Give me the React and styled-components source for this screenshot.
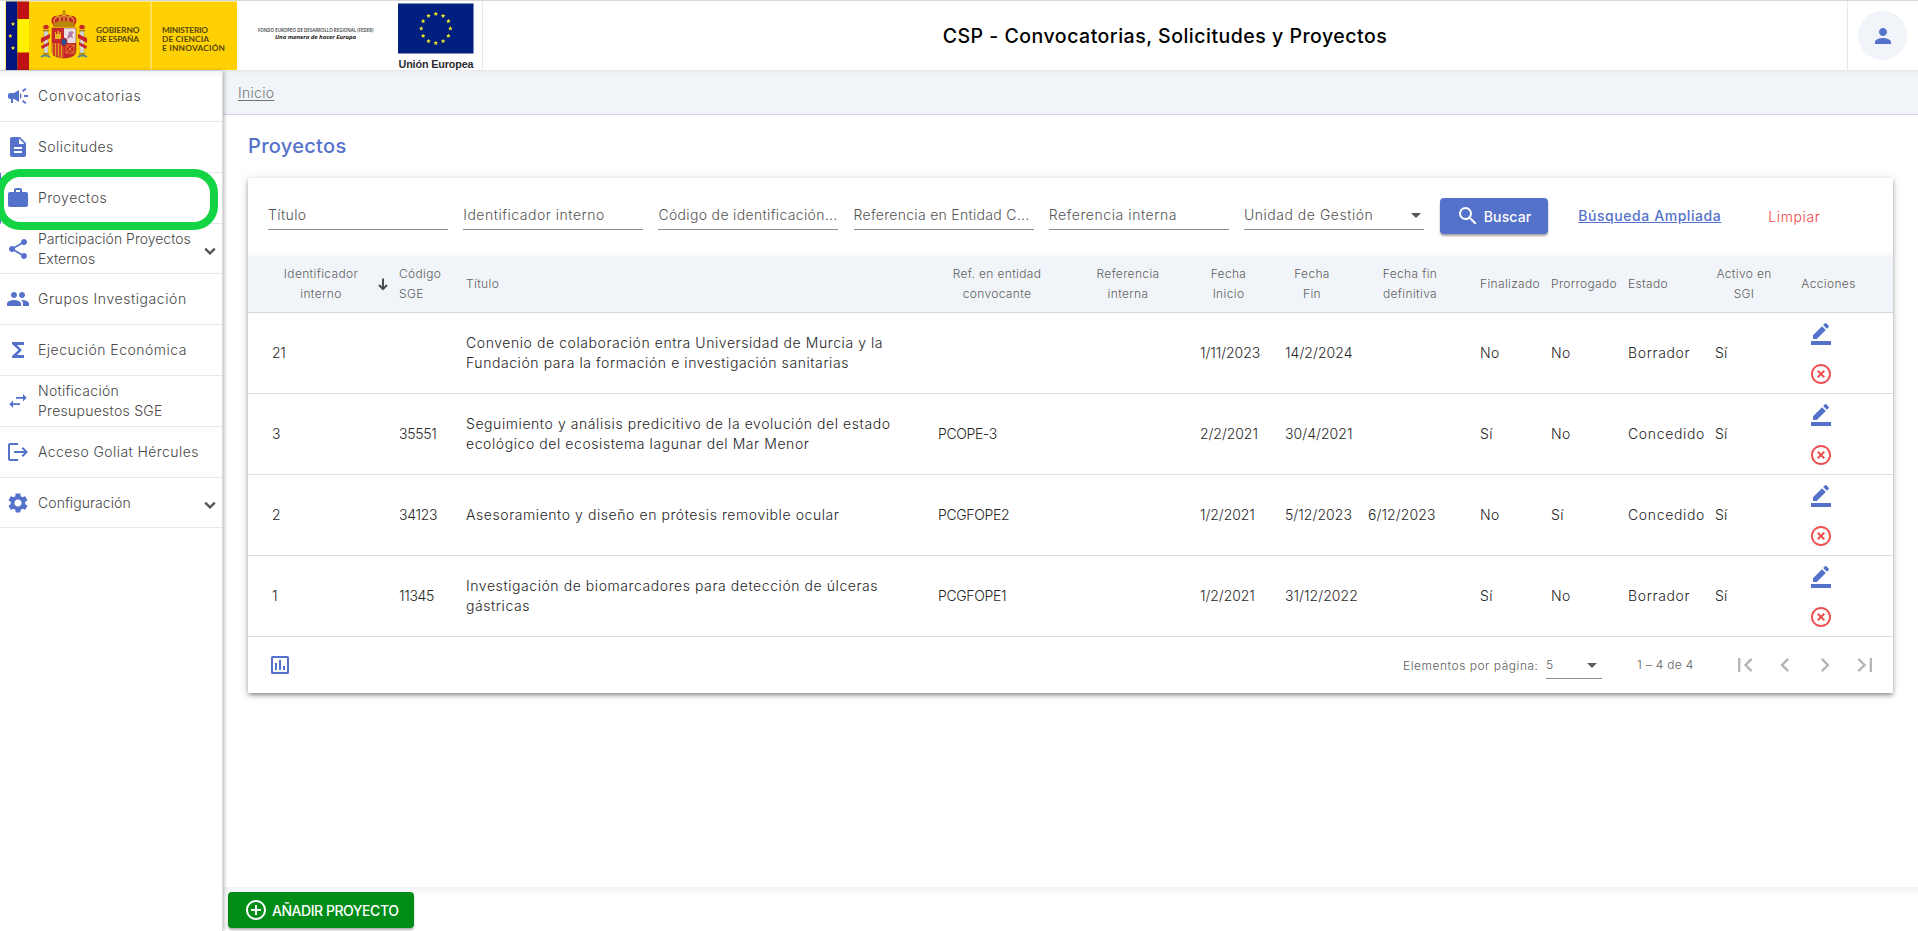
import React from "react";
import styled, { createGlobalStyle } from "styled-components";
import {
  MdCampaign, MdDescription, MdWork, MdShare, MdPeople, MdFunctions, MdLogout, MdSettings,
  MdSearch, MdArrowDropDown, MdPerson, MdFirstPage, MdLastPage, MdChevronLeft,
  MdChevronRight, MdAddCircleOutline, MdHighlightOff, MdBorderColor,
} from "react-icons/md";

const BLUE = "#5572cb";

const Global = createGlobalStyle`
  *, *::before, *::after { box-sizing: border-box; }
  body {
    margin: 0; background: #fff; color: #262626; overflow: hidden;
    font-family: Inter, "Open Sans", sans-serif; font-weight: 300; font-size: 14px;
  }
  button { font: inherit; border: 0; padding: 0; background: none; color: inherit; }
  svg { display: block; flex: none; }
`;

const Page = styled.div`
  height: 931px; width: 1918px; display: flex; flex-direction: column; overflow: hidden;
`;

const Header = styled.header`
  height: 71px; flex: none; display: flex; border-top: 1px solid #d8d8d8; border-bottom: 1px solid #e6e8ee;
`;
const LogoArea = styled.div`width: 483px; border-right: 1px solid #e6e8ee;`;
const AppTitle = styled.h1`
  flex: 1; margin: 0; display: flex; align-items: center; justify-content: center;
  font-size: 19.5px; font-weight: 500; letter-spacing: 0.5px; color: #000;
`;
const UserArea = styled.div`
  width: 71px; border-left: 1px solid #e6e8ee; padding: 10px 0 0 10px;
`;
const Avatar = styled.div`
  width: 49px; height: 49px; border-radius: 50%; background: #f1f5f9; color: ${BLUE};
  display: flex; align-items: center; justify-content: center;
`;

const Body = styled.div`flex: 1; display: flex; min-height: 0;`;
const Sidebar = styled.nav`
  width: 223px; flex: none; position: relative; z-index: 2; background: #fff;
  border-right: 1px solid #dcdcdc; box-shadow: 1px 0 4px rgba(0, 0, 0, 0.3), inset 0 9px 9px -9px rgba(30, 30, 80, 0.12);
`;
const NavItem = styled.a`
  position: relative; display: flex; align-items: center; height: ${(p) => (p.$open ? 50 : 51)}px;
  border-bottom: 1px solid #e6e8ee; color: #474747;
  font-size: 14px; line-height: 20px; letter-spacing: ${(p) => p.$track}px;
  border-left: ${(p) => (p.$active ? `1px solid ${BLUE}` : "0")};
  padding-left: ${(p) => (p.$active ? 5 : 6)}px;
  > svg:first-child { color: ${BLUE}; margin-right: 8px; }
`;
const NavText = styled.span`flex: 1; white-space: pre;`;
const ChevronSvg = styled.svg`margin: 4px 6px 0 0;`;
const Highlight = styled.span`
  position: absolute; z-index: 3; left: -5px; top: -4px; width: 222px; height: 61px;
  border: 8px solid #12d444; border-radius: 24px;
`;

const Content = styled.main`flex: 1; display: flex; flex-direction: column; min-width: 0;`;
const Breadcrumb = styled.div`
  height: 44px; flex: none; padding: 0 0 0 15px; display: flex; align-items: center;
  background: linear-gradient(#eeeff4, #f1f5f9 9px); border-bottom: 1px solid #d0d4da;
`;
const CrumbLink = styled.a`
  color: #757575; text-decoration: underline; text-underline-offset: 2px; letter-spacing: 0.3px;
`;
const Scroll = styled.div`flex: 1; padding: 19px 25px 0; background: #fff;`;
const SectionTitle = styled.h2`
  margin: 0 0 19px; height: 25px; line-height: 25px; font-size: 20px; font-weight: 500; color: ${BLUE};
  letter-spacing: 0.3px;
`;
const Card = styled.section`
  width: 1645px; height: 515px; background: #fff;
  box-shadow: 0 3px 4px -1px rgba(0, 0, 0, 0.25), 0 2px 5px rgba(0, 0, 0, 0.2), 0 1px 12px rgba(0, 0, 0, 0.1);
`;
const FilterBar = styled.form`
  height: 79px; padding: 20px 0 0 20px; display: flex; box-shadow: inset 0 -7px 8px -8px rgba(0, 0, 0, 0.1);
`;
const Field = styled.div`
  width: 180px; height: 32px; margin-right: 15.2px; display: flex; align-items: center; flex: none;
  border-bottom: 1px solid #8c8c8c; color: #555; letter-spacing: ${(p) => p.$track}px; padding-top: 3px;
`;
const FieldLabel = styled.span`flex: 1; white-space: nowrap; line-height: 20px;`;
const FieldArrow = styled(MdArrowDropDown)`margin-right: -4px;`;
const SearchButton = styled.button`
  width: 108px; height: 36px; border-radius: 4px; background: ${BLUE}; color: #fff; font-weight: 500;
  margin-left: 0.6px; display: flex; align-items: center; padding-left: 16px; gap: 4px;
  box-shadow: 0 2px 2px rgba(0, 0, 0, 0.35); letter-spacing: 0.15px;
`;
const AdvancedLink = styled.a`
  margin: 0 47px 0 30.5px; line-height: 36px; font-weight: 500; color: ${BLUE}; text-decoration: underline;
  letter-spacing: 0.57px;
`;
const ClearButton = styled.button`height: 36px; color: #f04444; letter-spacing: 0.6px;`;

const Row = styled.div`
  display: grid; align-items: center; padding-left: 24px; border-bottom: 1px solid #dfdfdf;
  grid-template-columns: 127px 67px 472px 150px 112px 85px 83px 112px 71px 77px 87px 83px 1fr;
  height: 81px; line-height: 20px;
`;
const HeadRow = styled(Row)`
  height: 56px; padding-bottom: 1px; background: #f1f5f9; color: #606060; font-size: 12px;
  letter-spacing: 0.35px; border-color: #d3d6da;
`;
const HeadLabel = styled.div`
  width: ${(p) => (p.$w ? `${p.$w}px` : "auto")}; text-align: ${(p) => (p.$w ? "center" : "left")};
  white-space: pre;
`;
const SortHead = styled.div`display: flex; align-items: center; gap: 6px;`;
const Cell = styled.div`white-space: pre; letter-spacing: ${(p) => p.$track || 0}px;`;
const Actions = styled.div`
  display: flex; flex-direction: column; align-items: center; width: 46px; gap: 17px;
  color: ${BLUE};
`;
const DeleteIcon = styled(MdHighlightOff)`color: #ee5050;`;

const Paginator = styled.footer`
  height: 56px; display: flex; align-items: center; padding-left: 20px; font-size: 12px; color: #606060;
`;
const PageSizeLabel = styled.span`margin: 0 8px 0 1111px; width: 135px; white-space: nowrap; letter-spacing: 0.52px;`;
const PageSize = styled.div`
  width: 56px; height: 28px; display: flex; align-items: center; justify-content: space-between;
  border-bottom: 1px solid #8c8c8c; line-height: 26px;
`;
const SizeArrow = styled(MdArrowDropDown)`margin-right: -2px;`;
const RangeLabel = styled.span`width: 94px; margin: -2px 0 0 35px; letter-spacing: 0.3px;`;
const PageButtons = styled.div`display: flex; gap: 12px; color: #b5b5b5;`;

const ActionBar = styled.div`
  height: 44px; flex: none; padding: 5px 0 0 5px; background: linear-gradient(#f3f4f8, #fff 10px);
`;
const AddButton = styled.button`
  width: 186px; height: 36px; border-radius: 4px; background: #008c17; color: #fff; font-weight: 500;
  display: flex; align-items: center; gap: 4px; padding-left: 16px; box-shadow: 0 2px 2px rgba(0, 0, 0, 0.3);
  letter-spacing: -0.46px;
`;

const STARS = Array.from({ length: 12 }, (_, i) => {
  const a = (i * Math.PI) / 6;
  return [Math.sin(a), -Math.cos(a)];
});

const Star = ({ x, y, r, fill }) => {
  const pts = Array.from({ length: 10 }, (_, i) => {
    const a = (i * Math.PI) / 5;
    const q = i % 2 ? r * 0.45 : r;
    return `${x + q * Math.sin(a)},${y - q * Math.cos(a)}`;
  }).join(" ");
  return <polygon points={pts} fill={fill} />;
};

const CoatOfArms = () => (
  <g>
    <g stroke="#8d8a7d" strokeWidth="0.4">
      <rect x="44" y="31" width="4" height="22" fill="#d9d9d6" />
      <rect x="80" y="31" width="4" height="22" fill="#d9d9d6" />
    </g>
    <g fill="#c9252c">
      <path d="M43 27l1.5-2h3l1.5 2-1 2h-4zM79 27l1.5-2h3l1.5 2-1 2h-4z" />
      <path d="M41 38l9-4v4l-9 5zM87 38l-9-4v4l9 5z" />
      <path d="M41 46l8-4v3l-7 4zM87 46l-8-4v3l7 4z" />
      <path d="M52 23c-2-5 2-8 6-7 2-2 10-2 12 0 4-1 8 2 6 7l-2 4H54z" />
    </g>
    <path d="M54 22c0-4 3-6 6-5M74 22c0-4-3-6-6-5M64 14v8M60 22c-1-4 1-6 4-7 3 1 5 3 4 7" fill="none" stroke="#ddb32b" strokeWidth="1.2" />
    <path d="M53 23q11-4 22 0l-1 4H54z" fill="#b8860b" />
    <path d="M64 10v5M62.5 12h3" stroke="#8a6a10" strokeWidth="1" />
    <path d="M52 28h12v15H52z" fill="#c9252c" />
    <path d="M64 28h12v15H64z" fill="#e8dfe2" />
    <path d="M52 43h12v15c-7 0-12-2-12-8z" fill="#e3a11a" />
    <path d="M64 43h12v7c0 6-5 8-12 8z" fill="#c9252c" />
    <path d="M54 43v13M57 43v14M60 43v14M63 43v15" stroke="#c9252c" strokeWidth="1.5" />
    <path d="M55 39v-7h1v2h1.5v-3h1.5v3H60v-2h1v7z" fill="#e8b526" />
    <path d="M67 39l2-7 3-1 2 2-2 1 1 5-2-2z" fill="#b678a5" />
    <path d="M66 45h8v8h-8zM66 45l8 8M74 45l-8 8" fill="none" stroke="#df9c23" strokeWidth="0.7" />
    <ellipse cx="64" cy="42" rx="2.9" ry="3.6" fill="#24559b" stroke="#b9222a" strokeWidth="1.1" />
    <path d="M52 28h24v22c0 6-5 8-12 8s-12-2-12-8z" fill="none" stroke="#a33424" strokeWidth="0.6" />
    <path d="M41 57q4-3 9 0M78 57q4-3 9 0" stroke="#4d8d93" strokeWidth="1.8" fill="none" />
    <path d="M43 54h6M79 54h6M43 30.5h6M79 30.5h6" stroke="#ac7a13" strokeWidth="1.3" />
  </g>
);

const Logos = () => (
  <svg width="482" height="70" viewBox="0 1 482 70">
    <rect x="5.5" y="1.5" width="231.5" height="68.5" fill="#ffd103" />
    <rect x="6" y="1.5" width="11.5" height="68.5" fill="#051580" />
    <rect x="17.5" y="1.5" width="11.5" height="17.5" fill="#c01215" />
    <rect x="17.5" y="19" width="11.5" height="33.5" fill="#fff100" />
    <rect x="17.5" y="52.5" width="11.5" height="17.5" fill="#c01215" />
    <Star x={13} y={24} r={2.3} fill="#ffe81a" />
    <Star x={10.3} y={36} r={2.3} fill="#ffe81a" />
    <Star x={13} y={48} r={2.3} fill="#ffe81a" />
    <CoatOfArms />
    <rect x="150.3" y="1.5" width="1.5" height="68.5" fill="#ffe372" />
    <g fontFamily="Lato, sans-serif" fontWeight="700" fontSize="8.3" fill="#55460a">
      <text x="96" y="33" textLength="43.5">GOBIERNO</text>
      <text x="96" y="42" textLength="43">DE ESPAÑA</text>
      <text x="162" y="33" textLength="46">MINISTERIO</text>
      <text x="162" y="42" textLength="47">DE CIENCIA</text>
      <text x="162" y="51" textLength="63">E INNOVACIÓN</text>
    </g>
    <text x="258" y="31.7" textLength="115.5" fontFamily="Open Sans, sans-serif" fontWeight="600" fontSize="4.4" fill="#333">FONDO EUROPEO DE DESARROLLO REGIONAL (FEDER)</text>
    <text x="275" y="39" textLength="81" fontFamily="Open Sans, sans-serif" fontWeight="700" fontStyle="italic" fontSize="6" fill="#222">Una manera de hacer Europa</text>
    <rect x="398" y="3.5" width="75.5" height="50" fill="#001f7e" />
    {STARS.map(([sx, sy], i) => <Star key={i} x={435.8 + sx * 14.6} y={28.5 + sy * 14.6} r={2.4} fill="#f3ea26" />)}
    <text x="398.5" y="67.5" textLength="75" fontFamily="Liberation Sans, sans-serif" fontWeight="700" fontSize="10.8" fill="#2b2b33">Unión Europea</text>
  </svg>
);

const SwapIcon = () => (
  <svg width="24" height="24" viewBox="0 0 24 24" fill="currentColor">
    <path d="M7 11.5L3.3 15.2 7 18.9v-2.8h7v-1.9H7zM20.7 8.8L17 5.1v2.8h-7v1.9h7v2.8z" />
  </svg>
);
const Chevron = () => (
  <ChevronSvg width="12" height="12" viewBox="0 0 12 12" fill="none" stroke="#555" strokeWidth="2.3">
    <path d="M1.2 3.6L6 8.4l4.800-4.800" />
  </ChevronSvg>
);
const ArrowDown = () => (
  <svg width="14" height="14" viewBox="0 0 14 14" fill="none" stroke="#4d4d4d" strokeWidth="2">
    <path d="M7 1.5v10M3 8l4 4 4-4" />
  </svg>
);
const ChartIcon = () => (
  <svg width="24" height="24" viewBox="0 0 24 24" fill={BLUE}>
    <path d="M4.5 3h15A1.5 1.5 0 0 1 21 4.5v15a1.5 1.5 0 0 1-1.5 1.5h-15A1.5 1.5 0 0 1 3 19.5v-15A1.5 1.5 0 0 1 4.5 3zM5 5v14h14V5zM7 10h2v7H7zM11 7h2v10h-2zM15 13h2v4h-2z" fillRule="evenodd" />
  </svg>
);

const NAV = [
  { label: "Convocatorias", icon: MdCampaign, track: 0.75 },
  { label: "Solicitudes", icon: MdDescription, track: 0.43 },
  { label: "Proyectos", icon: MdWork, active: true, track: 0.5 },
  { label: "Participación Proyectos\nExternos", icon: MdShare, open: true, track: 0 },
  { label: "Grupos Investigación", icon: MdPeople, track: 0.57 },
  { label: "Ejecución Económica", icon: MdFunctions, track: 0.5 },
  { label: "Notificación\nPresupuestos SGE", icon: SwapIcon, track: 0.27 },
  { label: "Acceso Goliat Hércules", icon: MdLogout, track: 0.42 },
  { label: "Configuración", icon: MdSettings, open: true, track: 0.07 },
];

const FILTERS = [
  ["Título", 0.4],
  ["Identificador interno", 0.52],
  ["Código de identificación...", 0.34],
  ["Referencia en Entidad C...", 0.3],
  ["Referencia interna", 0.57],
];

const HEADS = [
  ["Código\nSGE"], ["Título"], ["Ref. en entidad\nconvocante", 118], ["Referencia\ninterna", 80],
  ["Fecha\nInicio", 57], ["Fecha\nFin", 54], ["Fecha fin\ndefinitiva", 84], ["Finalizado"], ["Prorrogado"],
  ["Estado"], ["Activo en\nSGI", 58], ["Acciones", 61],
];

const ROWS = [
  ["21", "", "Convenio de colaboración entra Universidad de Murcia y la\nFundación para la formación e investigación sanitarias", "", "", "1/11/2023", "14/2/2024", "", "No", "No", "Borrador", "Sí"],
  ["3", "35551", "Seguimiento y análisis predicitivo de la evolución del estado\necológico del ecosistema lagunar del Mar Menor", "PCOPE-3", "", "2/2/2021", "30/4/2021", "", "Sí", "No", "Concedido", "Sí"],
  ["2", "34123", "Asesoramiento y diseño en prótesis removible ocular", "PCGFOPE2", "", "1/2/2021", "5/12/2023", "6/12/2023", "No", "Sí", "Concedido", "Sí"],
  ["1", "11345", "Investigación de biomarcadores para detección de úlceras\ngástricas", "PCGFOPE1", "", "1/2/2021", "31/12/2022", "", "Sí", "No", "Borrador", "Sí"],
];
const TRACKING = [-0.3, -0.3, 0.57, -0.34, 0, -0.05, 0.05, 0.1, 0.3, 0.3, 0.65, 0.2];

export default function App() {
  return (
    <Page>
      <Global />
      <Header>
        <LogoArea><Logos /></LogoArea>
        <AppTitle>CSP - Convocatorias, Solicitudes y Proyectos</AppTitle>
        <UserArea><Avatar><MdPerson size={24} /></Avatar></UserArea>
      </Header>
      <Body>
        <Sidebar>
          {NAV.map(({ label, icon: Icon, active, open, track }) => (
            <NavItem key={label} $active={active} $open={open} $track={track}>
              <Icon size={24} />
              <NavText>{label}</NavText>
              {open && <Chevron />}
              {active && <Highlight />}
            </NavItem>
          ))}
        </Sidebar>
        <Content>
          <Breadcrumb><CrumbLink>Inicio</CrumbLink></Breadcrumb>
          <Scroll>
            <SectionTitle>Proyectos</SectionTitle>
            <Card>
              <FilterBar>
                {FILTERS.map(([f, track]) => <Field key={f} $track={track}><FieldLabel>{f}</FieldLabel></Field>)}
                <Field $track={0.52}><FieldLabel>Unidad de Gestión</FieldLabel><FieldArrow size={24} /></Field>
                <SearchButton type="button"><MdSearch size={24} />Buscar</SearchButton>
                <AdvancedLink>Búsqueda Ampliada</AdvancedLink>
                <ClearButton type="button">Limpiar</ClearButton>
              </FilterBar>
              <HeadRow>
                <SortHead><HeadLabel $w={98}>{"Identificador\ninterno"}</HeadLabel><ArrowDown /></SortHead>
                {HEADS.map(([h, w]) => <HeadLabel key={h} $w={w}>{h}</HeadLabel>)}
              </HeadRow>
              {ROWS.map((r) => (
                <Row key={r[0]}>
                  {r.map((c, i) => <Cell key={i} $track={TRACKING[i]}>{c}</Cell>)}
                  <Actions><MdBorderColor size={24} /><DeleteIcon size={24} /></Actions>
                </Row>
              ))}
              <Paginator>
                <ChartIcon />
                <PageSizeLabel>Elementos por página:</PageSizeLabel>
                <PageSize>5<SizeArrow size={24} /></PageSize>
                <RangeLabel>1 – 4 de 4</RangeLabel>
                <PageButtons>
                  <MdFirstPage size={28} /><MdChevronLeft size={28} /><MdChevronRight size={28} /><MdLastPage size={28} />
                </PageButtons>
              </Paginator>
            </Card>
          </Scroll>
          <ActionBar><AddButton><MdAddCircleOutline size={24} />AÑADIR PROYECTO</AddButton></ActionBar>
        </Content>
      </Body>
    </Page>
  );
}
